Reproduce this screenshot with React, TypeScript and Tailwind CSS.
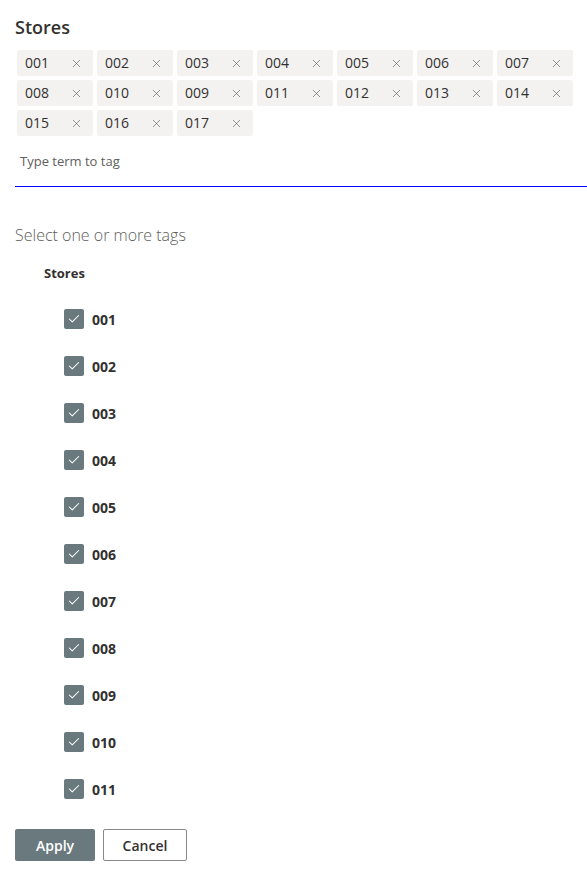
import { Check, X } from "lucide-react"

const TAGS = ["001", "002", "003", "004", "005", "006", "007", "008", "010", "009", "011", "012", "013", "014", "015", "016", "017"]
const OPTIONS = ["001", "002", "003", "004", "005", "006", "007", "008", "009", "010", "011"]

export default function App() {
  return (
    <div className="min-h-[872px] w-[587px] bg-white text-[#323130]" style={{ fontFamily: '"Open Sans", "Noto Sans", sans-serif' }}>
      <div className="pl-[15px] pt-[14px]">
        <h1 className="text-[18px] font-semibold leading-[26px]">Stores</h1>
      </div>

      {/* Picker */}
      <div className="mt-[10px] ml-[15px] border-b border-[#0000ff]">
        <div className="flex w-[560px] flex-wrap gap-1 pl-[2px]">
          {TAGS.map((t) => (
            <div key={t} className="flex h-[26px] w-[76px] items-center justify-between rounded-[2px] bg-[#f3f2f1] pl-2 pr-[10px] text-[14px] leading-[20px]">
              <span className="-mt-[1px]">{t}</span>
              <X className="h-[13px] w-[13px] text-[#605e5c]" strokeWidth={1.2} />
            </div>
          ))}
        </div>
        <div className="pl-[5px] pb-[14px] pt-[14px] text-[13px] leading-[22px] text-[#605e5c]">Type term to tag</div>
      </div>

      <div className="pl-[15px] pt-[36px] text-[16px] font-light leading-[24px] text-[#605e5c]">Select one or more tags</div>

      <div className="pl-[44px] pt-[17px] text-[13px] font-bold leading-[18px]">Stores</div>

      <div className="flex flex-col gap-[27px] pl-[64px] pt-[27px]">
        {OPTIONS.map((o) => (
          <div key={o} className="flex h-[20px] items-center gap-2">
            <span className="flex h-[20px] w-[20px] items-center justify-center rounded-[2px] bg-[#69797e]">
              <Check className="h-[14px] w-[14px] text-white" strokeWidth={1.8} />
            </span>
            <span className="text-[14px] font-bold">{o}</span>
          </div>
        ))}
      </div>

      <div className="flex gap-2 pl-[15px] pt-[30px]">
        <button className="h-[32px] w-[80px] rounded-[2px] bg-[#69797e] text-[14px] font-semibold text-white">Apply</button>
        <button className="h-[32px] w-[84px] rounded-[2px] border border-[#8a8886] bg-white text-[14px] font-semibold text-[#323130]">Cancel</button>
      </div>
    </div>
  )
}
